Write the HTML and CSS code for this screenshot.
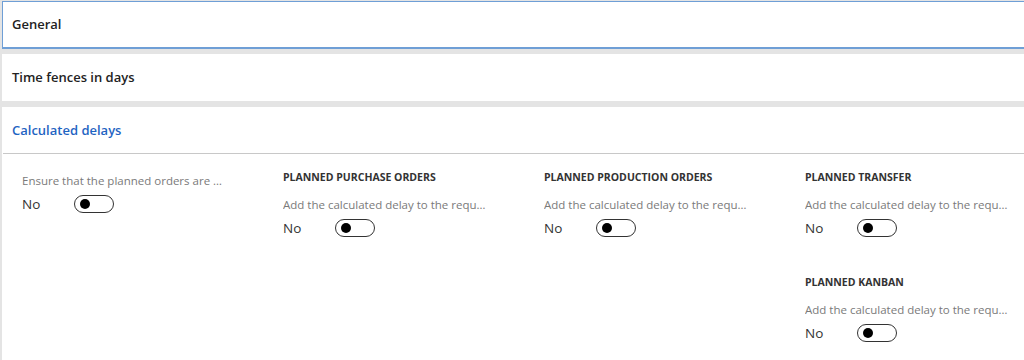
FILE: index.html
```html
<!DOCTYPE html>
<html lang="en">
<head>
    <meta charset="UTF-8">
    <title>Master planning parameters</title>
    <link rel="stylesheet" href="styles.css">
</head>
<body>
    <div class="page">
        <div class="panel panel-focused">
            <div class="panel-header">General</div>
        </div>

        <div class="panel">
            <div class="panel-header">Time fences in days</div>
        </div>

        <div class="panel panel-open">
            <div class="panel-header header-active">Calculated delays</div>
            <div class="panel-body">
                <div class="column">
                    <div class="field field-solo">
                        <div class="field-label" title="Ensure that the planned orders are not scheduled before today">Ensure that the planned orders are not scheduled before today</div>
                        <div class="field-row">
                            <span class="field-value">No</span>
                            <span class="toggle"><span class="knob"></span></span>
                        </div>
                    </div>
                </div>

                <div class="column">
                    <div class="group">
                        <div class="group-title">Planned purchase orders</div>
                        <div class="field-label" title="Add the calculated delay to the requirement date">Add the calculated delay to the requirement date</div>
                        <div class="field-row">
                            <span class="field-value">No</span>
                            <span class="toggle"><span class="knob"></span></span>
                        </div>
                    </div>
                </div>

                <div class="column">
                    <div class="group">
                        <div class="group-title">Planned production orders</div>
                        <div class="field-label" title="Add the calculated delay to the requirement date">Add the calculated delay to the requirement date</div>
                        <div class="field-row">
                            <span class="field-value">No</span>
                            <span class="toggle"><span class="knob"></span></span>
                        </div>
                    </div>
                </div>

                <div class="column">
                    <div class="group">
                        <div class="group-title">Planned transfer</div>
                        <div class="field-label" title="Add the calculated delay to the requirement date">Add the calculated delay to the requirement date</div>
                        <div class="field-row">
                            <span class="field-value">No</span>
                            <span class="toggle"><span class="knob"></span></span>
                        </div>
                    </div>
                    <div class="group">
                        <div class="group-title">Planned kanban</div>
                        <div class="field-label" title="Add the calculated delay to the requirement date">Add the calculated delay to the requirement date</div>
                        <div class="field-row">
                            <span class="field-value">No</span>
                            <span class="toggle"><span class="knob"></span></span>
                        </div>
                    </div>
                </div>
            </div>
        </div>
    </div>
</body>
</html>
```

FILE: styles.css
```css
html, body {
    overflow: hidden;
}

body {
    margin: 0;
    background-color: #e4e4e4;
    font-family: "Open Sans", "Noto Sans", sans-serif;
    color: #333;
}

.page {
    padding: 1px 0 0 2px;
    margin-right: -6px;
}

.panel {
    background-color: #fff;
    margin-bottom: 6px;
    border: 1px solid transparent;
    border-right: none;
}

.panel-open {
    margin-bottom: 0;
    border-bottom: none;
}

.panel-focused {
    border-color: #6f9fd6;
    border-bottom-width: 2px;
    margin-bottom: 5px;
}

.panel-header {
    height: 45px;
    line-height: 44px;
    padding-left: 9px;
    font-size: 13px;
    font-weight: 600;
    color: #222;
}

.header-active {
    color: #1f64c2;
    border-bottom: 1px solid #c8c8c8;
}

.panel-body {
    display: grid;
    grid-template-columns: repeat(4, 261px);
    padding: 15px 0 0 19px;
    height: 206px;
    box-sizing: border-box;
}

.group + .group {
    margin-top: 33px;
}

.group-title {
    font-size: 10.5px;
    font-weight: 700;
    line-height: 16px;
    text-transform: uppercase;
    color: #333;
    margin-bottom: 12px;
}

.field-solo {
    padding-top: 4px;
}

.field-label {
    width: 204px;
    font-size: 11.5px;
    line-height: 16px;
    color: #7a7a7a;
    white-space: nowrap;
    overflow: hidden;
    text-overflow: ellipsis;
    margin-bottom: 2px;
}

.field-row {
    display: flex;
    align-items: center;
    height: 26px;
}

.field-value {
    width: 52px;
    font-size: 13.5px;
    color: #333;
}

.toggle {
    position: relative;
    width: 38px;
    height: 16px;
    border: 1px solid #333;
    border-radius: 10px;
}

.knob {
    position: absolute;
    left: 5px;
    top: 3px;
    width: 10px;
    height: 10px;
    border-radius: 50%;
    background-color: #000;
}
```
